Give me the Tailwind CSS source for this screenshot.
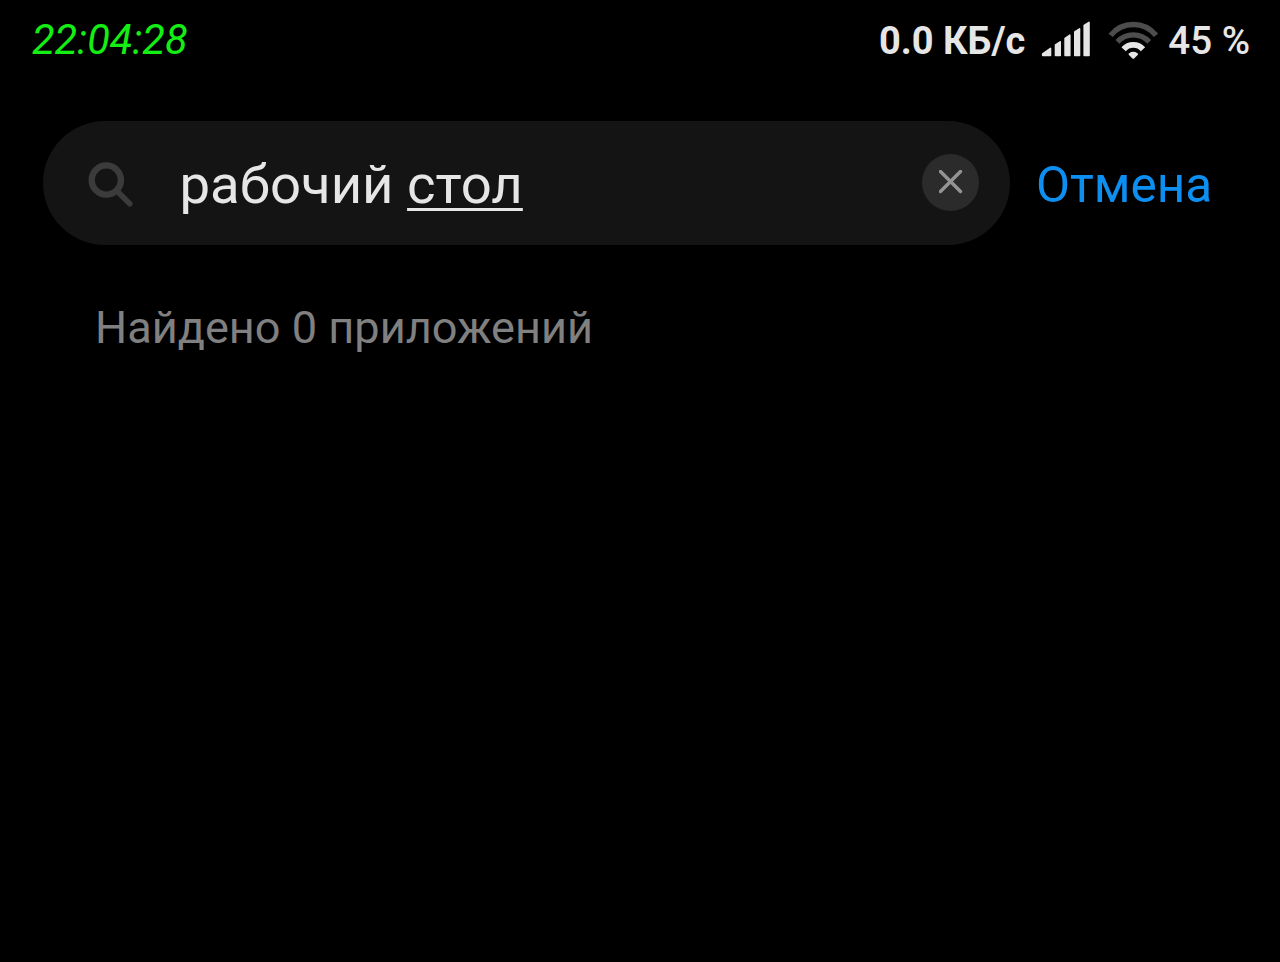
<!DOCTYPE html>
<html lang="ru">
<head>
    <meta charset="UTF-8">
    <meta name="viewport" content="width=device-width, initial-scale=1.0">
    <title>Поиск приложений</title>
    <script src="https://cdn.jsdelivr.net/npm/@tailwindcss/browser@4"></script>
</head>
<body class="bg-black min-h-screen overflow-hidden font-['Roboto',sans-serif]">
    <!-- Status bar -->
    <header class="flex items-center justify-between h-20 pl-8 pr-[30px]">
        <span class="text-[41.5px] leading-none italic text-[#14ee14]">22:04:28</span>
        <div class="flex items-center text-[#e6e6e6]">
            <span class="pt-0.5 text-[38px] leading-none font-bold">0.0 КБ/с</span>
            <!-- Signal -->
            <svg class="ml-4 w-[50px] h-10" viewBox="0 0 50 40" fill="currentColor" stroke="currentColor" stroke-width="1.6" stroke-linejoin="round">
                <path d="M1.7 34L9.5 28.4V35.4H1.7z"/>
                <path d="M14.5 24.9L19.2 21.8V35.4H14.5z"/>
                <path d="M24.1 18.3L28.8 15.2V35.4H24.1z"/>
                <path d="M33.8 11.9L38.5 8.8V35.4H33.8z"/>
                <path d="M43.2 5.5L48 2.4V35.4H43.2z"/>
            </svg>
            <!-- Wi-Fi -->
            <svg class="ml-[17px] w-[50px] h-10" viewBox="0 0 50 40" fill="none" stroke="currentColor" stroke-width="5.4">
                <path d="M2.6 15.4A29 29 0 0 1 48 15.4" stroke="#4d4d4d"/>
                <path d="M9.4 21.9A21.6 21.6 0 0 1 41.2 21.9" stroke="#4d4d4d"/>
                <path d="M15.6 29.2A13 13 0 0 1 35 29.2" stroke-width="5.8"/>
                <path d="M21.8 34.2Q25.3 31.8 28.8 34.2L25.3 37.6z" fill="currentColor" stroke-width="2.4" stroke-linejoin="round"/>
            </svg>
            <span class="ml-2.5 pt-[3px] text-[38.5px] leading-none font-medium">45 %</span>
        </div>
    </header>

    <main>
        <!-- Search -->
        <div class="flex items-center mt-[41px] ml-[43px]">
            <div class="flex items-center w-[967px] h-[124px] rounded-full bg-[#141414] pl-[45px] pr-[31px]">
                <svg class="w-[46px] h-[50px]" viewBox="0 0 46 50" fill="none" stroke="#3b3b3b" stroke-width="6.4" stroke-linecap="round">
                    <circle cx="18.3" cy="22" r="14.6"/>
                    <path d="M29 33l12.8 12.8" stroke-width="5.5"/>
                </svg>
                <span class="grow ml-[45.5px] pt-[3px] text-[54.5px] leading-none text-[#e6e6e6]">рабочий <span class="underline decoration-[3px] underline-offset-[5px] [text-decoration-skip-ink:none]">стол</span></span>
                <button type="button" class="flex items-center justify-center size-[57px] mb-0.5 rounded-full bg-[#2b2b2b]">
                    <svg class="size-6" viewBox="0 0 24 24" stroke="#949494" stroke-width="3.4" stroke-linecap="round">
                        <path d="M1.5 1.5l20 20M21.5 1.5L1.5 21.5"/>
                    </svg>
                </button>
            </div>
            <button type="button" class="ml-[26px] pt-[5px] text-[49.5px] leading-none text-[#0d8ff2]">Отмена</button>
        </div>

        <!-- Results -->
        <p class="mt-[60px] ml-[95px] text-[45.1px] leading-none text-[#808080]">Найдено 0 приложений</p>
    </main>
</body>
</html>
